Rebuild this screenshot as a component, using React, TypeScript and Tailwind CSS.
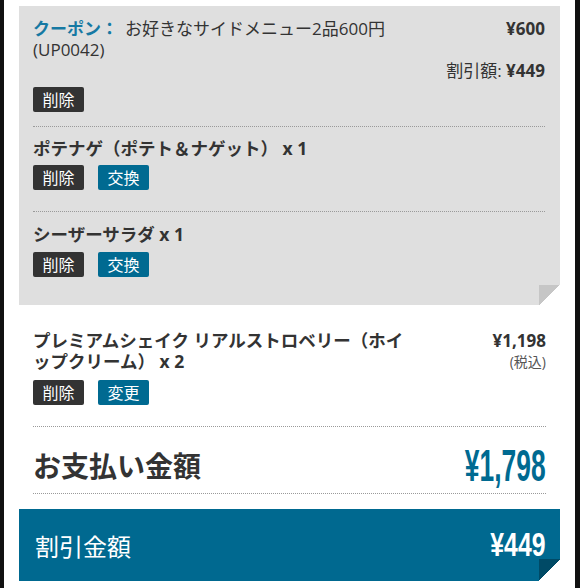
import React from "react";

const font = "font-['Open_Sans','Noto_Sans_CJK_JP',sans-serif]";

function DelBtn() {
  return (
    <div className="flex h-[25px] w-[51px] items-center justify-center rounded-[2px] bg-[#333333] text-[16px] leading-none text-white">
      削除
    </div>
  );
}

function BlueBtn({ label }: { label: string }) {
  return (
    <div className="flex h-[25px] w-[51px] items-center justify-center rounded-[2px] bg-[#006a91] text-[16px] leading-none text-white">
      {label}
    </div>
  );
}

export default function App() {
  return (
    <div className={`flex h-[588px] w-[580px] overflow-hidden bg-black ${font} text-[#333333]`}>
      <div className="w-[4px] shrink-0 bg-[#111111]" />
      <div className="flex-1 bg-white px-[15px] pt-[6px]">
        {/* gray panel */}
        <div className="relative bg-[#dfdfdf] pl-[14px] pr-[15px] pt-[12px] pb-[28px]">
          {/* coupon */}
          <div className="border-b border-dotted border-[#9a9a9a] pb-[14px]">
            <div className="flex justify-between text-[17px] leading-[21px]">
              <div className="w-[380px] [line-break:loose]">
                <span className="mr-[7px] font-bold text-[#1679a3]">クーポン：</span>
                <span>お好きなサイドメニュー2品600円(UP0042)</span>
              </div>
              <div className="flex flex-col items-end">
                <div className="font-bold">¥600</div>
                <div className="mt-[21px]">
                  割引額: <span className="font-bold">¥449</span>
                </div>
              </div>
            </div>
            <div className="mt-[6px] flex gap-[14px]">
              <DelBtn />
            </div>
          </div>
          {/* item */}
          <div className="border-b border-dotted border-[#9a9a9a] pt-[11px] pb-[21px]">
            <div className="text-[17.5px] font-bold leading-[21px]">ポテナゲ（ポテト＆ナゲット） x 1</div>
            <div className="mt-[6px] flex gap-[14px]">
              <DelBtn />
              <BlueBtn label="交換" />
            </div>
          </div>
          {/* item */}
          <div className="pt-[12px]">
            <div className="text-[17.5px] font-bold leading-[21px]">シーザーサラダ x 1</div>
            <div className="mt-[7px] flex gap-[14px]">
              <DelBtn />
              <BlueBtn label="交換" />
            </div>
          </div>
          <div className="absolute bottom-0 right-0 h-[20px] w-[21px] bg-[linear-gradient(to_bottom_right,#c6c6c6_50%,#ffffff_50%)]" />
        </div>

        {/* item outside panel */}
        <div className="mx-[14px] border-b border-dotted border-[#9a9a9a] pt-[25px] pb-[21px]">
          <div className="flex justify-between">
            <div className="w-[382px] text-[17.5px] font-bold leading-[21px] [line-break:loose]">
              プレミアムシェイク リアルストロベリー（ホイップクリーム） x 2
            </div>
            <div className="flex flex-col items-end">
              <div className="text-[17px] font-bold leading-[21px]">¥1,198</div>
              <div className="text-[14px] leading-[21px] text-[#555555]">(税込)</div>
            </div>
          </div>
          <div className="mt-[8px] flex gap-[14px]">
            <DelBtn />
            <BlueBtn label="変更" />
          </div>
        </div>

        {/* total */}
        <div className="mx-[14px] flex h-[67px] items-center justify-between border-b border-dotted border-[#9a9a9a] pt-[12px]">
          <div className="text-[28px] font-bold leading-none">お支払い金額</div>
          <div className="origin-right scale-x-[0.6] font-['Liberation_Sans',sans-serif] text-[44px] font-bold leading-none text-[#006a91]">
            ¥1,798
          </div>
        </div>

        {/* discount bar */}
        <div className="relative mt-[15px] flex h-[72px] items-center justify-between bg-[#006990] pl-[16px] pr-[15px] pt-[4px] text-white">
          <div className="text-[24px] leading-none">割引金額</div>
          <div className="mb-[6px] origin-right scale-x-[0.75] font-['Liberation_Sans',sans-serif] text-[33px] font-bold leading-none">
            ¥449
          </div>
          <div className="absolute bottom-0 right-0 h-[22px] w-[21px] bg-[linear-gradient(to_bottom_right,#004a66_50%,#ffffff_50%)]" />
        </div>
      </div>
      <div className="w-[5px] shrink-0 bg-[#111111]" />
    </div>
  );
}
